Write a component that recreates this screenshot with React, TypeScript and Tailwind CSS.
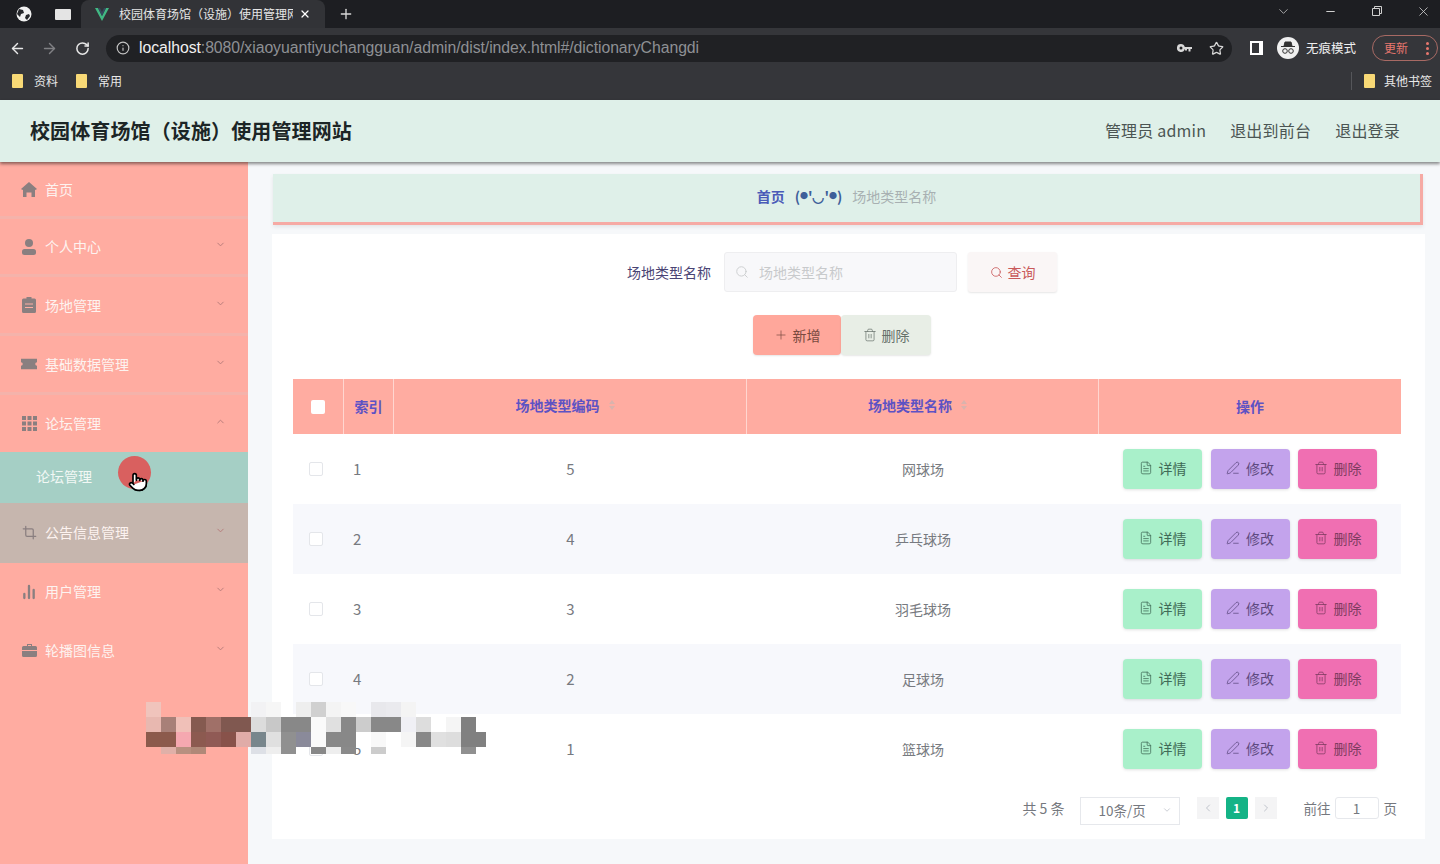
import {
  ArrowLeft,
  ArrowRight,
  BarChart2,
  ChevronDown,
  ChevronLeft,
  ChevronRight,
  ChevronUp,
  Crop,
  FileText,
  Info,
  Minus,
  PenLine,
  Plus,
  Pointer,
  RotateCw,
  Search,
  Star,
  Trash2,
  X,
} from 'lucide-react';
import type { ReactNode } from 'react';

const rows = [
  { index: 1, code: 5, name: '网球场' },
  { index: 2, code: 4, name: '乒乓球场' },
  { index: 3, code: 3, name: '羽毛球场' },
  { index: 4, code: 2, name: '足球场' },
  { index: 5, code: 1, name: '篮球场' },
];

// mosaic that hides part of the recording, 15px blocks
const mosaic = [
  ['#f0c4bc', '', '', '', '', '', '', '#f2f2f4', '#f6f6f6', '', '#eeeeee', '#d0d0d0', '#f4f4f4', '#f8f8f8', '', '#e8e8ec', '#eaeaee', '#f4f4f4', '', '', '', '', ''],
  ['#e8b8b0', '#a88078', '#f0c0b8', '#855a50', '#a07068', '#805850', '#805850', '#dcdcdc', '#c8c8c8', '#888888', '#888888', '#fafafa', '#e0e0e0', '#888888', '#cccccc', '#888888', '#888888', '#f0f0f5', '#dddddd', '#ffffff', '#f5f5f5', '#808080', ''],
  ['#8c5a4c', '#8c5a4c', '#f5a8b0', '#8c5a50', '#905a55', '#88524a', '#e0aca8', '#78868c', '#e0e0e0', '#909090', '#8a8a9a', '#fafafa', '#888888', '#888888', '#ffffff', '#f8f8f8', '#ffffff', '#f5f5f5', '#888888', '#e0e0e0', '#dddddd', '#808080', '#808080'],
  ['', '#e0b0a8', '#b89080', '#b08878', '', '', '', '#dde0e6', '#eeeeee', '#909090', '', '#888888', '#eeeeee', '#8a8a8a', '', '#cccccc', '', '', '', '', '', '#909090', ''],
];

function Folder() {
  return <span className="h-[14px] w-[11px] rounded-[1px] bg-[#f8d976]" />;
}

function ChromeBar() {
  return (
    <div className="shrink-0 bg-[#35363a] text-white">
      <div className="flex h-[28px] items-center bg-[#1d1e22]">
        <div className="flex h-full w-[81px] items-center pl-[16px]">
          <svg width="16" height="16" viewBox="0 0 16 16">
            <circle cx="8" cy="8" r="7.5" fill="#f1f1f1" />
            <path d="M3 3l4 1 1 3-3 1-1 3-3-3zM10 9l3-1 1 2-3 4-2-2z" fill="#26272b" />
          </svg>
          <span className="ml-[23px] h-[11px] w-[16px] rounded-[1px] bg-[#e4e4e4]" />
        </div>
        <div className="flex h-full w-[244px] items-center rounded-t-lg bg-[#323337] pl-[14px]">
          <svg width="14" height="13" viewBox="0 0 14 13">
            <path d="M0 0h3l4 8 4-8h3L7 13z" fill="#41b883" />
            <path d="M3 0h2l2 4 2-4h2L7 8z" fill="#35495e" />
          </svg>
          <span className="ml-[10px] w-[174px] overflow-hidden text-[12px] whitespace-nowrap text-[#e6e6e6]">校园体育场馆（设施）使用管理网站</span>
          <X size={12} strokeWidth={2.5} className="ml-[6px]" />
        </div>
        <Plus size={16} className="ml-[13px] text-[#d8d8d8]" />
        <div className="ml-auto flex -translate-y-[3px] items-center gap-[33.5px] pr-[9px] text-[#d0d0d0]">
          <ChevronDown size={15} strokeWidth={1.2} />
          <Minus size={13} />
          <svg width="12" height="12" viewBox="0 0 12 12" fill="none" stroke="currentColor">
            <path d="M1.5 3.5h7v7h-7zM3.500 3.500v-2h7v7h-2" />
          </svg>
          <X size={15} strokeWidth={1.3} />
        </div>
      </div>
      <div className="flex h-[40px] items-center">
        <ArrowLeft size={17} className="ml-[9px] text-[#e8e8e8]" />
        <ArrowRight size={17} className="ml-[15px] text-[#808184]" />
        <RotateCw size={15} strokeWidth={2.4} className="ml-[17px] text-[#e8e8e8]" />
        <div className="ml-[16px] flex h-[27px] w-[1126px] items-center rounded-full bg-[#202124] pl-[10px]">
          <Info size={14} className="text-[#c4c4c4]" />
          <span className="ml-[9px] font-['Liberation_Sans',sans-serif] text-[15.800px] tracking-[-0.06px] text-[#f0f0f0]">
            localhost<span className="text-[#8e9094]">:8080/xiaoyuantiyuchangguan/admin/dist/index.html#/dictionaryChangdi</span>
          </span>
          <svg width="15" height="9" viewBox="0 0 15 9" className="ml-auto text-[#d8d8d8]" fill="currentColor">
            <path d="M4 0a4 4 0 0 1 3.800 3H15v2h-1.500v2.500h-2V5H10v1.500H8V5h-.2A4 4 0 1 1 4 0zm0 2.500a1.500 1.500 0 1 0 0 3 1.500 1.500 0 0 0 0-3z" />
          </svg>
          <Star size={15} className="mr-[8px] ml-[17px] text-[#d8d8d8]" />
        </div>
        <span className="ml-[18px] h-[14px] w-[13px] border-2 border-r-[4px] border-white" />
        <div className="ml-[14px] flex h-[27px] items-center">
          <span className="flex h-[22px] w-[22px] items-center justify-center rounded-full bg-[#f0f0f0]">
            <svg width="16" height="14" viewBox="0 0 16 14" fill="none" stroke="#333">
              <path d="M4 5l1-4h6l1 4zM1 5.5h14" fill="#333" />
              <circle cx="5" cy="10" r="2.3" />
              <circle cx="11" cy="10" r="2.3" />
            </svg>
          </span>
          <span className="ml-[7px] text-[12.500px] text-[#efefef]">无痕模式</span>
        </div>
        <div className="mr-[2px] ml-auto flex h-[26px] w-[66px] items-center justify-between rounded-full border border-[#a86a64] pr-[8px] pl-[11px]">
          <span className="text-[12px] text-[#e8776e]">更新</span>
          <span className="flex flex-col gap-[2px]">
            <i className="h-[3px] w-[3px] rounded-full bg-[#e8776e]" />
            <i className="h-[3px] w-[3px] rounded-full bg-[#e8776e]" />
            <i className="h-[3px] w-[3px] rounded-full bg-[#e8776e]" />
          </span>
        </div>
      </div>
      <div className="flex h-[32px] items-center pb-[7px] text-[12px] text-[#e8e8e8]">
        <div className="ml-[12px] flex items-center gap-[11px]">
          <Folder />
          <span>资料</span>
        </div>
        <div className="ml-[18px] flex items-center gap-[11px]">
          <Folder />
          <span>常用</span>
        </div>
        <div className="mr-[8px] ml-auto flex items-center gap-[9px] border-l border-[#55565a] pl-[12px]">
          <Folder />
          <span>其他书签</span>
        </div>
      </div>
    </div>
  );
}

function HomeIcon() {
  return (
    <svg width="16" height="15" viewBox="0 0 16 15" fill="#8a7f80">
      <path d="M8 0l8 7-1.500 1-.5-.4V15h-3.500v-4.500h-5V15H2V7.600L1.500 8 0 7z" />
    </svg>
  );
}

function UserIcon() {
  return (
    <svg width="16" height="16" viewBox="0 0 16 16" fill="#8a7f80">
      <circle cx="8" cy="4" r="4" />
      <rect x="1" y="10" width="14" height="6" rx="2.500" />
    </svg>
  );
}

function ClipIcon() {
  return (
    <svg width="14" height="16" viewBox="0 0 14 16" fill="#8a7f80">
      <path d="M1.500 1.500h3V0h5v1.500h3A1.500 1.500 0 0 1 14 3v11.500a1.500 1.500 0 0 1-1.500 1.500h-11A1.500 1.500 0 0 1 0 14.500V3a1.500 1.500 0 0 1 1.500-1.500z" />
      <path d="M3 7h8M3 10.500h8" stroke="#ffaea3" />
    </svg>
  );
}

function TicketIcon() {
  return (
    <svg width="18" height="12" viewBox="0 0 18 12" fill="#8a7f80">
      <path d="M0 0h18v4a2 2 0 0 0 0 4v4H0V8a2 2 0 0 0 0-4z" />
    </svg>
  );
}

function GridIcon() {
  return (
    <svg width="15" height="15" viewBox="0 0 15 15" fill="#8a7f80">
      {[0, 5.5, 11].map(y =>
        [0, 5.5, 11].map(x => <rect key={`${x}-${y}`} x={x} y={y} width="4" height="4" />),
      )}
    </svg>
  );
}

function CaseIcon() {
  return (
    <svg width="15" height="13" viewBox="0 0 15 13" fill="#8a7f80">
      <path d="M5 2V0h5v2h3.500A1.500 1.500 0 0 1 15 3.500V6H0V3.500A1.500 1.500 0 0 1 1.500 2zM6 1v1h3V1zM0 7h15v4.500a1.500 1.500 0 0 1-1.500 1.500h-12A1.500 1.500 0 0 1 0 11.500z" />
    </svg>
  );
}

function MenuItem({ icon, label, arrow, className }: { icon: ReactNode; label: string; arrow?: 'up' | 'down'; className?: string }) {
  return (
    <div className={`flex items-center pr-[22px] pl-[21px] text-[14px] text-[#fdf3f0] ${className}`}>
      <span className="flex w-[16px] justify-center">{icon}</span>
      <span className="ml-[8px]">{label}</span>
      {arrow === 'down' && <ChevronDown size={11} className="ml-auto -translate-y-[2px] text-[#b57a78]" />}
      {arrow === 'up' && <ChevronUp size={11} className="ml-auto -translate-y-[2px] text-[#b57a78]" />}
    </div>
  );
}

function Sidebar() {
  const line = 'border-b-[3px] border-[#f4b3ab]';
  return (
    <aside className="w-[248px] shrink-0 bg-[#ffaca1]">
      <MenuItem icon={<HomeIcon />} label="首页" className={`h-[57px] ${line}`} />
      <MenuItem icon={<UserIcon />} label="个人中心" arrow="down" className={`h-[58px] ${line}`} />
      <MenuItem icon={<ClipIcon />} label="场地管理" arrow="down" className={`h-[59px] ${line}`} />
      <MenuItem icon={<TicketIcon />} label="基础数据管理" arrow="down" className={`h-[59px] ${line}`} />
      <MenuItem icon={<GridIcon />} label="论坛管理" arrow="up" className="h-[57px]" />
      <div className="relative flex h-[51px] items-center bg-[#a5cfc5] pb-[2px] pl-[36px] text-[14px] text-[#f2f8f5]">
        论坛管理
        <span className="absolute top-[4px] left-[118px] h-[33px] w-[33px] rounded-full bg-[#d9605f]" />
        <Pointer size={20} className="absolute top-[20px] left-[128px] fill-white text-black" />
      </div>
      <MenuItem icon={<Crop size={15} className="text-[#8a7f80]" />} label="公告信息管理" arrow="down" className="h-[60px] bg-[#c6b6ae] pb-[1px]" />
      <MenuItem icon={<BarChart2 size={16} strokeWidth={3.5} className="text-[#8a7f80]" />} label="用户管理" arrow="down" className="h-[59px] pb-[2px]" />
      <MenuItem icon={<CaseIcon />} label="轮播图信息" arrow="down" className="h-[58px] pb-[2px]" />
    </aside>
  );
}

function SortCaret() {
  return (
    <span className="mr-[10px] ml-[9px] inline-flex flex-col gap-[2px]">
      <i className="h-0 w-0 border-x-[3px] border-b-[4px] border-x-transparent border-b-[#d9b3ad]" />
      <i className="h-0 w-0 border-x-[3px] border-t-[4px] border-x-transparent border-t-[#d9b3ad]" />
    </span>
  );
}

function RowButton({ icon, label, className }: { icon: ReactNode; label: string; className: string }) {
  return (
    <button className={`flex h-[40px] w-[79px] items-center justify-center gap-[6px] rounded-[4px] pb-[2px] text-[14px] shadow-[0_1px_3px_rgba(0,0,0,0.12)] ${className}`}>
      {icon}
      {label}
    </button>
  );
}

function DictTable() {
  const cols = 'grid grid-cols-[51px_50px_353px_352px_302px]';
  const headCell = 'flex h-full items-center justify-center border-r border-[#ffd6d0]';
  return (
    <div className="w-[1108px] text-[14px]">
      <div className={`${cols} h-[55px] bg-[#ffaca1] font-bold text-[#5d52c4]`}>
        <div className={headCell}>
          <span className="h-[14px] w-[14px] rounded-[2px] bg-white" />
        </div>
        <div className={headCell}>索引</div>
        <div className={`${headCell} pb-[3px]`}>
          场地类型编码
          <SortCaret />
        </div>
        <div className={`${headCell} pb-[3px]`}>
          场地类型名称
          <SortCaret />
        </div>
        <div className="flex items-center justify-center">操作</div>
      </div>
      {rows.map((row, i) => (
        <div key={row.index} className={`${cols} h-[70px] items-center text-[#777a80] ${i % 2 === 1 ? 'bg-[#f7f8fc]' : 'bg-white'}`}>
          <div className="flex justify-center pr-[5px]">
            <span className="h-[14px] w-[14px] rounded-[2px] border border-[#e4e6ea] bg-white" />
          </div>
          <div className="pl-[9px] text-[15px]">{row.index}</div>
          <div className="text-center text-[15px]">{row.code}</div>
          <div className="text-center">{row.name}</div>
          <div className="flex justify-end gap-[8.5px] pr-[24px]">
            <RowButton icon={<FileText size={14} strokeWidth={1.3} />} label="详情" className="bg-[#a9f0ca] text-[#3f6a56]" />
            <RowButton icon={<PenLine size={14} strokeWidth={1.3} />} label="修改" className="bg-[#c3a3ec] text-[#5e4a80]" />
            <RowButton icon={<Trash2 size={14} strokeWidth={1.3} />} label="删除" className="bg-[#f06fb2] text-[#7e3c60]" />
          </div>
        </div>
      ))}
    </div>
  );
}

function Pagination() {
  return (
    <div className="mt-[13px] flex h-[28px] w-[1108px] items-start justify-end pr-[4px] text-[13.500px] leading-[22px] text-[#75787e]">
      <span className="text-[14px]">共 5 条</span>
      <div className="relative ml-[15px] flex h-[28px] w-[100px] items-center border border-[#e6e8ec] bg-white pb-[2px] pl-[18px]">
        10条/页
        <ChevronDown size={10} className="absolute right-[7px] text-[#c0c4cc]" />
      </div>
      <span className="ml-[17px] flex h-[22px] w-[22px] items-center justify-center bg-[#f4f4f5] text-[#c0c4cc]">
        <ChevronLeft size={12} />
      </span>
      <span className="ml-[7px] flex h-[22px] w-[22px] items-center justify-center rounded-[2px] bg-[#14b386] text-[12px] font-bold text-white">1</span>
      <span className="ml-[7px] flex h-[22px] w-[22px] items-center justify-center bg-[#f4f4f5] text-[#c0c4cc]">
        <ChevronRight size={12} />
      </span>
      <span className="ml-[27px]">前往</span>
      <span className="ml-[4px] flex h-[22px] w-[44px] items-center justify-center rounded-[3px] border border-[#e6e8ec] bg-white">1</span>
      <span className="ml-[5px]">页</span>
    </div>
  );
}

function Mosaic() {
  return (
    <div className="absolute top-[702px] left-[146px] grid grid-cols-[repeat(22,15px)_10px] grid-rows-[15px_15px_15px_7px]">
      {mosaic.flat().map((color, i) => (
        <span key={i} style={color ? { backgroundColor: color } : undefined} />
      ))}
    </div>
  );
}

export default function App() {
  return (
    <div className="relative flex h-screen flex-col overflow-hidden font-['Noto_Sans_CJK_SC','Noto_Sans',sans-serif]">
      <ChromeBar />
      <header className="relative z-10 flex h-[62px] shrink-0 items-center justify-between bg-[#dff0e9] pr-[40px] pl-[30px] shadow-[0_2px_3px_rgba(0,0,0,0.45)]">
        <h1 className="text-[20px] font-bold tracking-[0.12px] text-[#1c2526]">校园体育场馆（设施）使用管理网站</h1>
        <div className="flex gap-[24px] pb-[2px] text-[16px] tracking-[0.2px] text-[#4b5553]">
          <span>管理员 admin</span>
          <span>退出到前台</span>
          <span>退出登录</span>
        </div>
      </header>
      <div className="flex min-h-0 flex-1">
        <Sidebar />
        <main className="min-w-0 flex-1 bg-[#f6f8fa] pt-[12px] pl-[24px]">
          <div className="ml-[1px] flex h-[51px] w-[1150px] items-center justify-center border-r-[3px] border-b-[3px] border-[#f6aaa4] bg-[#dff0e9] pb-[4px] text-[14px] shadow-[0_2px_4px_rgba(0,0,0,0.08)]">
            <span className="font-bold text-[#4a5bb8]">首页</span>
            <span className="ml-[10px] flex items-center font-bold text-[#3f5f9a]">
              (<span className="text-[8px]">●</span>'◡'<span className="text-[8px]">●</span>)
            </span>
            <span className="ml-[10px] text-[#a8b0b2]">场地类型名称</span>
          </div>
          <div className="mt-[9px] h-[605px] w-[1153px] bg-white pt-[18px] pl-[21px]">
            <div className="flex h-[40px] w-[1108px] items-center">
              <span className="ml-[334px] text-[14px] text-[#4a4474]">场地类型名称</span>
              <div className="ml-[13px] flex h-[40px] w-[233px] items-center rounded-[3px] border border-[#eeeef0] bg-[#f8f8fa] pl-[10px] text-[14px] text-[#c8cacc]">
                <Search size={14} strokeWidth={1.5} />
                <span className="ml-[10px]">场地类型名称</span>
              </div>
              <button className="ml-[11px] flex h-[40px] w-[89px] items-center justify-center gap-[5px] rounded-[3px] bg-[#faf6f6] text-[14px] text-[#c9595a] shadow-[0_1px_2px_rgba(0,0,0,0.1)]">
                <Search size={13} strokeWidth={1.5} />
                查询
              </button>
            </div>
            <div className="mt-[23px] ml-[460px] flex">
              <button className="flex h-[40px] w-[88px] items-center justify-center gap-[5px] rounded-[4px] bg-[#ffa79b] text-[14px] text-[#7a4a40] shadow-[0_1px_2px_rgba(0,0,0,0.1)]">
                <Plus size={14} strokeWidth={1.2} />
                新增
              </button>
              <button className="flex h-[40px] w-[90px] items-center justify-center gap-[5px] rounded-[4px] bg-[#e8eee6] text-[14px] text-[#66706a] shadow-[0_1px_2px_rgba(0,0,0,0.1)]">
                <Trash2 size={14} strokeWidth={1.2} />
                删除
              </button>
            </div>
            <div className="mt-[24px]">
              <DictTable />
              <Pagination />
            </div>
          </div>
        </main>
      </div>
      <Mosaic />
    </div>
  );
}
